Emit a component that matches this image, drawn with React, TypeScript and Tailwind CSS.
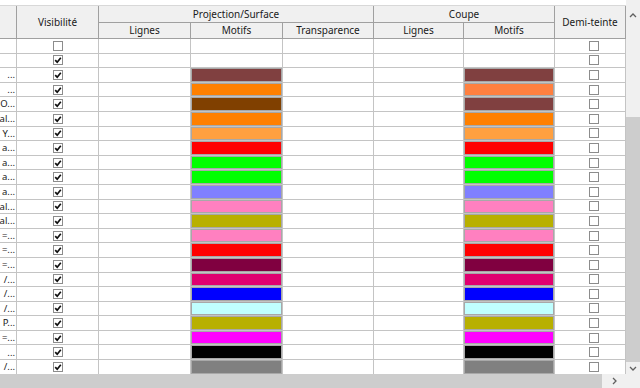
const cols = "grid grid-cols-[17px_82px_92px_92px_91px_90px_91px_71px]";

type Row = { name: string; vis: boolean; proj?: string; cut?: string };

const rows: Row[] = [
  { name: "", vis: false },
  { name: "", vis: true },
  { name: "...", vis: true, proj: "#804040", cut: "#804040" },
  { name: "...", vis: true, proj: "#ff8000", cut: "#ff8040" },
  { name: "O...", vis: true, proj: "#804000", cut: "#804040" },
  { name: "al...", vis: true, proj: "#ff8000", cut: "#ff8000" },
  { name: "Y...", vis: true, proj: "#ffa040", cut: "#ffa040" },
  { name: "a...", vis: true, proj: "#ff0000", cut: "#ff0000" },
  { name: "a...", vis: true, proj: "#00ff00", cut: "#00ff00" },
  { name: "a...", vis: true, proj: "#00ff00", cut: "#00ff00" },
  { name: "a...", vis: true, proj: "#8080ff", cut: "#8080ff" },
  { name: "al...", vis: true, proj: "#ff80c0", cut: "#ff80c0" },
  { name: "al...", vis: true, proj: "#b8b000", cut: "#b8b000" },
  { name: "=...", vis: true, proj: "#ff80c0", cut: "#ff80c0" },
  { name: "=...", vis: true, proj: "#ff0000", cut: "#ff0000" },
  { name: "=...", vis: true, proj: "#800040", cut: "#800040" },
  { name: "/...", vis: true, proj: "#e00070", cut: "#e00070" },
  { name: "/...", vis: true, proj: "#0000ff", cut: "#0000ff" },
  { name: "/...", vis: true, proj: "#c0ffff", cut: "#c0ffff" },
  { name: "P...", vis: true, proj: "#b8b000", cut: "#b8b000" },
  { name: "=...", vis: true, proj: "#ff00ff", cut: "#ff00ff" },
  { name: "...", vis: true, proj: "#000000", cut: "#000000" },
  { name: "/...", vis: true, proj: "#808080", cut: "#808080" },
];

function Box({ checked }: { checked?: boolean }) {
  return (
    <span className="inline-flex h-[10px] w-[10px] items-center justify-center border border-[#8c8c8c] bg-white">
      {checked && (
        <svg viewBox="0 0 8 8" className="h-[8px] w-[8px]">
          <path d="M1.2 4.2 L3.2 6.2 L6.8 1.8" stroke="#111" strokeWidth="1.7" fill="none" />
        </svg>
      )}
    </span>
  );
}

function Swatch({ color }: { color?: string }) {
  return (
    <div className="border-r border-b border-[#c4c4c4]">
      {color && <div className="h-full w-full border border-[#a8a8a8]" style={{ backgroundColor: color }} />}
    </div>
  );
}

export default function App() {
  const cell = "border-r border-b border-[#c4c4c4]";
  const head = "flex items-center justify-center border-r border-b border-[#a0a0a0] bg-[#f0f0f0]";
  return (
    <div
      className="flex h-[388px] w-[640px] flex-col overflow-hidden bg-white text-[10px] text-[#1a1a1a]"
      style={{ fontFamily: '"Noto Sans", "Open Sans", sans-serif' }}
    >
      <div className="flex min-h-0 flex-1">
        <div className="flex-1 pt-[5px]">
          <div className={`${cols} grid-rows-[17px_16px] border-t border-[#d8d8d8]`}>
            <div className={`${head} row-span-2`} />
            <div className={`${head} row-span-2`}>Visibilité</div>
            <div className={`${head} col-span-3`}>Projection/Surface</div>
            <div className={`${head} col-span-2`}>Coupe</div>
            <div className={`${head} row-span-2`}>Demi-teinte</div>
            <div className={head}>Lignes</div>
            <div className={head}>Motifs</div>
            <div className={head}>Transparence</div>
            <div className={head}>Lignes</div>
            <div className={head}>Motifs</div>
          </div>
          {rows.map((r, i) => (
            <div key={i} className={`${cols} h-[14.6px]`}>
              <div className={`${cell} flex items-center justify-end overflow-hidden whitespace-nowrap pr-[1px] text-[9.5px] leading-none`}>
                {r.name}
              </div>
              <div className={`${cell} flex items-center justify-center`}>
                <Box checked={r.vis} />
              </div>
              <div className={cell} />
              <Swatch color={r.proj} />
              <div className={cell} />
              <div className={cell} />
              <Swatch color={r.cut} />
              <div className={`${cell} flex items-center justify-center pl-[8px]`}>
                <Box />
              </div>
            </div>
          ))}
        </div>
        <div className="flex w-[14px] flex-col bg-[#f0f0f0]">
          <div className="flex h-[30px] items-center justify-center">
            <svg viewBox="0 0 8 5" className="h-[5px] w-[8px]">
              <path d="M1 4 L4 1 L7 4" stroke="#606060" strokeWidth="1.3" fill="none" />
            </svg>
          </div>
          <div className="mt-[87px] h-[245px] bg-[#cdcdcd]" />
          <div className="flex flex-1 items-center justify-center">
            <svg viewBox="0 0 8 5" className="h-[5px] w-[8px]">
              <path d="M1 1 L4 4 L7 1" stroke="#606060" strokeWidth="1.3" fill="none" />
            </svg>
          </div>
        </div>
      </div>
      <div className="flex h-[14px] bg-[#f0f0f0]">
        <div className="w-[602px] bg-[#cdcdcd]" />
        <div className="flex w-[24px] items-center justify-center">
          <svg viewBox="0 0 5 8" className="h-[8px] w-[5px]">
            <path d="M1 1 L4 4 L1 7" stroke="#606060" strokeWidth="1.3" fill="none" />
          </svg>
        </div>
      </div>
    </div>
  );
}
